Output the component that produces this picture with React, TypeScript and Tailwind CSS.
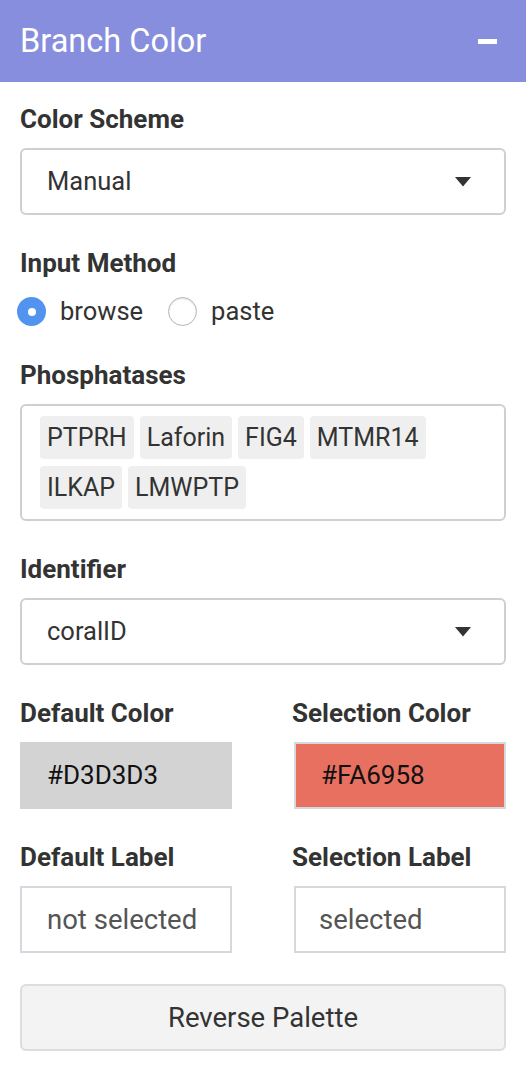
import { useState } from "react";

const TAGS = ["PTPRH", "Laforin", "FIG4", "MTMR14", "ILKAP", "LMWPTP"];

function Label({ children }: { children: React.ReactNode }) {
  return (
    <div className="mb-[14px] text-[26px] leading-[30px] font-bold text-[#333]">
      {children}
    </div>
  );
}

function Select({ value }: { value: string }) {
  return (
    <div className="flex h-[67px] items-center justify-between rounded-[6px] border-2 border-[#cfcfcf] bg-white pl-[25px] pr-[33px] text-[25.5px] text-[#333]">
      <span>{value}</span>
      <svg width="16" height="10" viewBox="0 0 16 10">
        <path d="M0 0 L16 0 L8 9.5 Z" fill="#333" />
      </svg>
    </div>
  );
}

function Radio({ checked, label }: { checked: boolean; label: string }) {
  return (
    <label className="flex items-center gap-[14px]">
      {checked ? (
        <span className="flex h-[29px] w-[29px] items-center justify-center rounded-full bg-[#5393f0]">
          <span className="h-[8px] w-[8px] rounded-full bg-white" />
        </span>
      ) : (
        <span className="h-[29px] w-[29px] rounded-full border-[1.5px] border-[#b5b5b5] bg-white shadow-[inset_0_1px_2px_rgba(0,0,0,0.12)]" />
      )}
      <span className="text-[25.5px] text-[#333]">{label}</span>
    </label>
  );
}

export default function App() {
  const [method] = useState("browse");

  return (
    <div className="w-[526px] bg-white font-['Roboto',sans-serif]">
      <div className="flex h-[82px] items-center justify-between bg-[#878ede] pl-[20px] pr-[29px]">
        <h1 className="text-[32.5px] leading-none text-white">Branch Color</h1>
        <span className="h-[5px] w-[19px] bg-white" />
      </div>

      <div className="px-[20px] pt-[22px] pb-[21px]">
        <Label>Color Scheme</Label>
        <Select value="Manual" />

        <div className="mt-[33px]">
          <Label>Input Method</Label>
          <div className="-ml-[3px] flex h-[39px] items-center gap-[25px]">
            <Radio checked={method === "browse"} label="browse" />
            <Radio checked={method === "paste"} label="paste" />
          </div>
        </div>

        <div className="mt-[29px]">
          <Label>Phosphatases</Label>
          <div className="flex flex-wrap gap-x-[6px] gap-y-[7px] rounded-[6px] border-2 border-[#cfcfcf] px-[18px] pt-[10px] pb-[10px]">
            {TAGS.map((t) => (
              <span
                key={t}
                className="flex h-[43px] items-center rounded-[4px] bg-[#efefef] px-[7px] text-[25px] text-[#333]"
              >
                {t}
              </span>
            ))}
          </div>
        </div>

        <div className="mt-[33px]">
          <Label>Identifier</Label>
          <Select value="coralID" />
        </div>

        <div className="mt-[33px] grid grid-cols-2 gap-x-[62px]">
          <div>
            <Label>Default Color</Label>
            <div className="flex h-[67px] items-center border-2 border-[#d3d3d3] bg-[#d3d3d3] pl-[25px] text-[26px] text-[#111]">
              #D3D3D3
            </div>
          </div>
          <div>
            <div className="-ml-[2px]">
              <Label>Selection Color</Label>
            </div>
            <div className="flex h-[67px] items-center border-2 border-[#d5d8dd] bg-[#e87060] pl-[25px] text-[26px] text-[#111]">
              #FA6958
            </div>
          </div>
        </div>

        <div className="mt-[33px] grid grid-cols-2 gap-x-[62px]">
          <div>
            <Label>Default Label</Label>
            <div className="flex h-[67px] items-center border-2 border-[#d5d8dd] pl-[25px] text-[27.5px] text-[#555]">
              not selected
            </div>
          </div>
          <div>
            <div className="-ml-[2px]">
              <Label>Selection Label</Label>
            </div>
            <div className="flex h-[67px] items-center border-2 border-[#d5d8dd] pl-[23px] text-[27.5px] text-[#555]">
              selected
            </div>
          </div>
        </div>

        <button className="mt-[31px] flex h-[67px] w-full items-center justify-center rounded-[6px] border-2 border-[#dddddd] bg-[#f3f3f3] text-[27.5px] text-[#333]">
          Reverse Palette
        </button>
      </div>
    </div>
  );
}
